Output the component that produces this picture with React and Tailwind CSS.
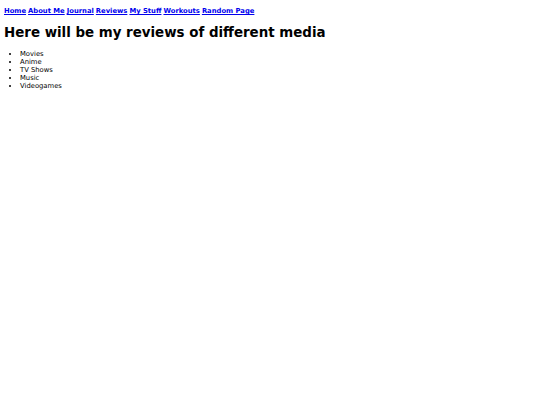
import React from 'react'

const links = ['Home', 'About Me', 'Journal', 'Reviews', 'My Stuff', 'Workouts', 'Random Page']
const media = ['Movies', 'Anime', 'TV Shows', 'Music', 'Videogames']

export default function App() {
  return (
    <div className="min-h-[405px] bg-white px-[4px] pt-[7px] text-black font-['DejaVu_Sans',sans-serif] text-[6.8px] leading-[8px]">
      <nav className="flex gap-[2px] font-bold">
        {links.map((l) => (
          <a key={l} href="#" className="text-[#0000ee] underline">
            {l}
          </a>
        ))}
      </nav>
      <h1 className="mt-[10px] text-[13.4px] leading-[16px] font-bold">
        Here will be my reviews of different media
      </h1>
      <ul className="mt-[9px] list-disc pl-[16px]">
        {media.map((m) => (
          <li key={m}>{m}</li>
        ))}
      </ul>
    </div>
  )
}
